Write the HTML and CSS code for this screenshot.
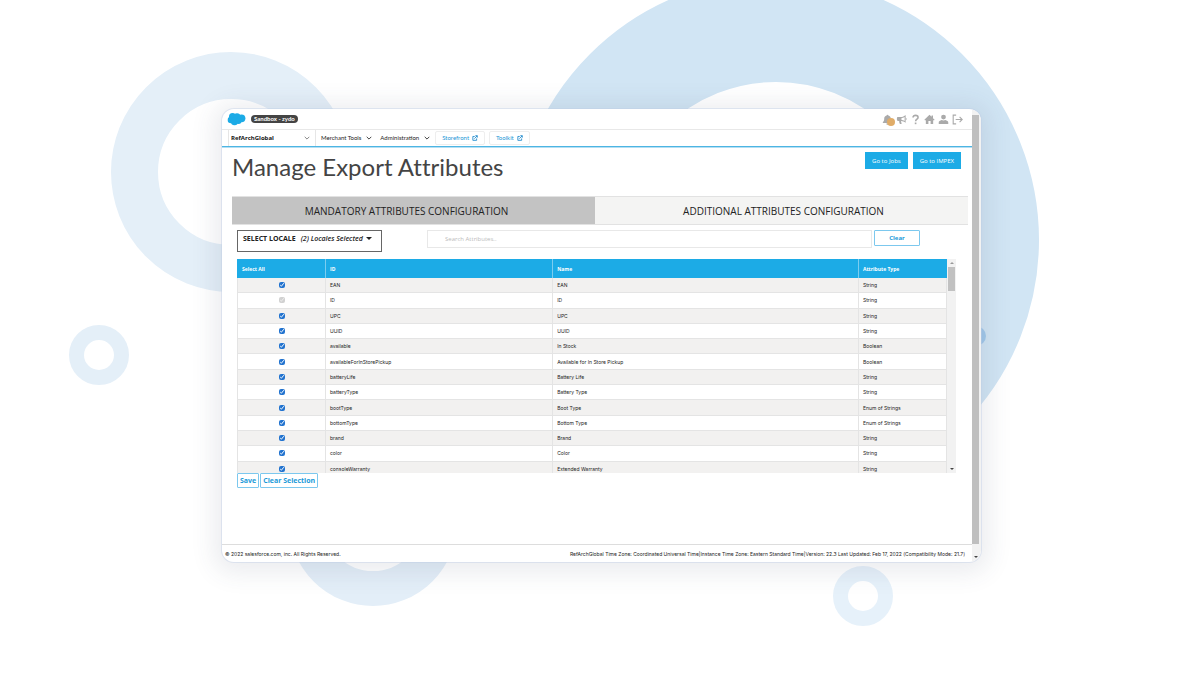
FILE: index.html
```html
<!DOCTYPE html>
<html lang="en">
<head>
<meta charset="utf-8">
<title>Manage Export Attributes</title>
<link rel="stylesheet" href="styles.css">
</head>
<body>
<svg class="backdrop" width="1200" height="676" viewBox="0 0 1200 676" aria-hidden="true">
  <g fill="none">
    <circle cx="776" cy="240" r="210.5" stroke="#d1e5f4" stroke-width="105"/>
    <circle cx="231" cy="172" r="96.5" stroke="#e4eff8" stroke-width="47"/>
    <circle cx="373" cy="522" r="66.5" stroke="#e3eef8" stroke-width="35"/>
    <circle cx="99" cy="355" r="22.5" stroke="#e4eff8" stroke-width="15"/>
    <circle cx="863" cy="596" r="22.5" stroke="#e6f1fa" stroke-width="15"/>
  </g>
  <circle cx="976" cy="336" r="10" fill="#a2c9ea"/>
</svg>
<main class="window">
  <div class="page">
    <header class="topbar">
      <svg class="cloud" viewBox="0 0 19 14" aria-label="Salesforce"><g fill="#1cabe6"><circle cx="5.500" cy="4.500" r="3.500"/><circle cx="10" cy="4.600" r="3.300"/><circle cx="14.500" cy="6.300" r="3.900"/><circle cx="4" cy="8" r="3.300"/><circle cx="7.500" cy="9.500" r="3.700"/><circle cx="11.500" cy="9" r="3"/></g></svg>
      <span class="badge">Sandbox - zydo</span>
      <div class="tools">
        <button class="tool bell" aria-label="Notifications"><svg viewBox="0 0 12 12"><path fill="#aaa" d="M6 .8c.6 0 .9.4.9.9C8.800 2.200 9.600 3.500 9.600 5.200c0 2 .5 2.900 1.500 3.800v.8H.9V9c1-.9 1.500-1.800 1.500-3.800 0-1.700.8-3 2.700-3.500 0-.5.300-.9.900-.9ZM4.600 10.300h2.800a1.400 1.400 0 0 1-2.800 0Z"/></svg><i class="dot"></i></button>
        <button class="tool" aria-label="Announcements"><svg viewBox="0 0 12 12"><path fill="#aaa" d="M10.500 1v8.500C9 8.300 7.500 7.700 5.600 7.600c-.3.900.2 1.800.8 2.700-.7.600-1.800.600-2.300.2-.5-1-.8-1.900-.6-2.900H2.200C1.500 7.600 1 7.100 1 6.400V4.500c0-.7.500-1.200 1.200-1.200H5C7.300 3.200 9 2.400 10.500 1ZM9.400 3.200C8.400 3.900 7.200 4.300 6 4.400v2.100c1.200.1 2.400.5 3.400 1.100ZM10.800 4.200a1.300 1.300 0 0 1 0 2.400Z"/></svg></button>
        <button class="tool" aria-label="Help"><svg viewBox="0 0 12 12"><path fill="none" stroke="#aaa" stroke-width="1.700" d="M3.300 3.800C3.300 2.200 4.400 1.500 6 1.500s2.800.9 2.800 2.300C8.800 5.600 6.100 5.700 6.100 8"/><rect x="5.200" y="9.300" width="1.800" height="1.800" fill="#aaa"/></svg></button>
        <button class="tool" aria-label="Home"><svg viewBox="0 0 12 12"><path fill="#aaa" d="M6 .9 8.300 3.100V1.600h1.500v3L11.600 6.400l-.8.800L10 6.500V11H7.200V7.700H4.800V11H2V6.500l-.8.700-.8-.8Z"/></svg></button>
        <button class="tool" aria-label="Account"><svg viewBox="0 0 12 12"><circle cx="6" cy="3.400" r="2.600" fill="#aaa"/><path fill="#aaa" d="M.8 10.800V9.400C.8 7.600 2.300 7 4 6.500c1 .7 3 .7 4 0 1.700.5 3.200 1.100 3.200 2.900v1.400Z"/></svg></button>
        <button class="tool" aria-label="Log out"><svg viewBox="0 0 12 12"><path fill="none" stroke="#aaa" stroke-width="1.200" d="M4.500 1.200H1.300v9.600h3.200M4 6h7M8.300 3.200 11.100 6 8.300 8.800"/></svg></button>
      </div>
    </header>
    <nav class="nav">
      <div class="site">
        <select class="site-select" aria-label="Site"><option>RefArchGlobal</option></select>
        <svg class="chev thin" viewBox="0 0 6 4"><path d="M.7.800 3 3.100 5.300.8"/></svg>
      </div>
      <button class="menu">Merchant Tools<svg class="chev" viewBox="0 0 6 4"><path d="M.7.800 3 3.100 5.300.8"/></svg></button>
      <button class="menu">Administration<svg class="chev" viewBox="0 0 6 4"><path d="M.7.800 3 3.100 5.300.8"/></svg></button>
      <a class="ext" href="#">Storefront<svg viewBox="0 0 7 7"><path d="M3.200 1.700H1v4.500h4.400V4M2.800 4.300 6 1M3.900.800H6.200V3.100"/></svg></a>
      <a class="ext" href="#">Toolkit<svg viewBox="0 0 7 7"><path d="M3.200 1.700H1v4.500h4.400V4M2.800 4.300 6 1M3.900.800H6.200V3.100"/></svg></a>
    </nav>
    <section class="content">
      <div class="heading">
        <h1>Manage Export Attributes</h1>
        <div class="actions"><button class="primary">Go to Jobs</button><button class="primary">Go to IMPEX</button></div>
      </div>
      <div class="tabs">
        <button class="tab active">MANDATORY ATTRIBUTES CONFIGURATION</button>
        <button class="tab">ADDITIONAL ATTRIBUTES CONFIGURATION</button>
      </div>
      <div class="panel">
        <div class="filters">
          <button class="locale"><b>SELECT LOCALE</b><em>(2) Locales Selected</em><i class="caret"></i></button>
          <input class="search" type="text" aria-label="Search attributes" placeholder="Search Attributes..">
          <button class="outline clear">Clear</button>
        </div>
        <div class="grid">
          <div class="rows">
            <table>
              <thead><tr><th class="c1">Select All</th><th class="c2">ID</th><th class="c3">Name</th><th class="c4">Attribute Type</th></tr></thead>
              <tbody>
                <tr><td><input type="checkbox" aria-label="EAN" checked></td><td>EAN</td><td>EAN</td><td>String</td></tr>
                <tr><td><input type="checkbox" aria-label="ID" checked disabled></td><td>ID</td><td>ID</td><td>String</td></tr>
                <tr><td><input type="checkbox" aria-label="UPC" checked></td><td>UPC</td><td>UPC</td><td>String</td></tr>
                <tr><td><input type="checkbox" aria-label="UUID" checked></td><td>UUID</td><td>UUID</td><td>String</td></tr>
                <tr><td><input type="checkbox" aria-label="available" checked></td><td>available</td><td>In Stock</td><td>Boolean</td></tr>
                <tr><td><input type="checkbox" aria-label="availableForInStorePickup" checked></td><td>availableForInStorePickup</td><td>Available for In Store Pickup</td><td>Boolean</td></tr>
                <tr><td><input type="checkbox" aria-label="batteryLife" checked></td><td>batteryLife</td><td>Battery Life</td><td>String</td></tr>
                <tr><td><input type="checkbox" aria-label="batteryType" checked></td><td>batteryType</td><td>Battery Type</td><td>String</td></tr>
                <tr><td><input type="checkbox" aria-label="bootType" checked></td><td>bootType</td><td>Boot Type</td><td>Enum of Strings</td></tr>
                <tr><td><input type="checkbox" aria-label="bottomType" checked></td><td>bottomType</td><td>Bottom Type</td><td>Enum of Strings</td></tr>
                <tr><td><input type="checkbox" aria-label="brand" checked></td><td>brand</td><td>Brand</td><td>String</td></tr>
                <tr><td><input type="checkbox" aria-label="color" checked></td><td>color</td><td>Color</td><td>String</td></tr>
                <tr><td><input type="checkbox" aria-label="consoleWarranty" checked></td><td>consoleWarranty</td><td>Extended Warranty</td><td>String</td></tr>
              </tbody>
            </table>
          </div>
          <div class="track"><i class="arrow up"></i><i class="thumb"></i><i class="arrow down"></i></div>
        </div>
        <div class="buttons"><button class="outline">Save</button><button class="outline">Clear Selection</button></div>
      </div>
    </section>
    <footer class="footer">
      <span>© 2022 salesforce.com, inc. All Rights Reserved.</span>
      <span>RefArchGlobal Time Zone: Coordinated Universal Time|Instance Time Zone: Eastern Standard Time|Version: 22.3 Last Updated: Feb 17, 2022 (Compatibility Mode: 21.7)</span>
    </footer>
  </div>
  <div class="scroll"><i class="bar"></i><i class="arrow down"></i></div>
</main>
</body>
</html>
```
FILE: styles.css
```css
* { box-sizing: border-box; }
body {
  margin: 0;
  padding: 109px 219px 0 222px;
  min-height: 100vh;
  background: #fff;
  color: #222;
  font: 5px/8px Inter, Arial, sans-serif;
  overflow: hidden;
}
button, select, input { font: inherit; color: inherit; margin: 0; padding: 0; border: 0; border-radius: 0; background: none; }
a { text-decoration: none; }

.backdrop { position: absolute; left: 0; top: 0; }

.window {
  position: relative;
  display: flex;
  background: #fff;
  border-radius: 12px;
  overflow: hidden;
  box-shadow: 0 0 0 1px rgba(190, 205, 230, .4), 0 3px 24px 8px rgba(60, 65, 95, .1);
}
.page { flex: 1; min-width: 0; display: flex; flex-direction: column; }
.scroll { width: 9px; padding: 6px 2px 0 0; display: flex; flex-direction: column; align-items: center; background: #f2f2f2; }
.bar { width: 100%; flex: 1; background: #bfbfbf; }
.scroll .down { margin: 12px 0 4px; }

.arrow { border: 2px solid transparent; }
.arrow.up { border-top: 0; border-bottom-color: #999; }
.arrow.down { border-bottom: 0; border-top-color: #444; }

.topbar { height: 21px; padding: 0 9px 0 5px; display: flex; align-items: center; gap: 5px; border-bottom: 1px solid #e8e8e8; }
.cloud { width: 19px; height: 14px; }
.badge { padding: 0 3px; border-radius: 4px; background: #444; color: #fff; font: bold 6px/8px Lato, sans-serif; }
.tools { margin-left: auto; display: flex; gap: 3px; }
.tool { width: 11px; height: 11px; }
.tool svg { display: block; width: 11px; height: 11px; }
.bell { position: relative; }
.dot { position: absolute; left: 5px; top: 4px; width: 8px; height: 8px; border-radius: 50%; background: #e0ac68; }

.nav { height: 17px; padding-left: 6px; display: flex; align-items: center; border-bottom: 1px solid #4db5e3; box-shadow: 0 1px #b5dff3; font: 6px/8px Lato, sans-serif; }
.site { height: 16px; width: 88px; padding: 0 5px 0 2px; display: flex; align-items: center; border: solid #e6e6e6; border-width: 0 1px; }
.site-select { flex: 1; appearance: none; font: bold 6px/8px "Open Sans", sans-serif; color: #111; }
.chev { width: 6px; height: 4px; fill: none; stroke: #444; stroke-width: 1; }
.chev.thin { stroke: #888; }
.menu { display: flex; align-items: center; gap: 5px; margin-left: 5px; }
.menu + .menu { margin-left: 8px; }
.ext { height: 14px; padding: 0 6px; margin-left: 4px; display: flex; align-items: center; gap: 3px; border: 1px solid #eee; border-radius: 2px; color: #1b96d6; }
.menu + .ext { margin-left: 5px; }
.ext svg { width: 6px; height: 6px; fill: none; stroke: #1b88cc; stroke-width: 1; }

.content { padding: 5px 4px 0 10px; height: 397px; }
.heading { height: 44px; display: flex; justify-content: space-between; align-items: flex-start; padding-right: 7px; }
h1 { margin: 0; font: 24px/30px Lato, sans-serif; font-variant-ligatures: none; color: #444; }
.actions { display: flex; gap: 5px; }
.primary { height: 17px; padding: 0 7px; background: #1cabe6; color: #fff; font: 6px/8px "Open Sans", sans-serif; }

.tabs { display: grid; grid-template-columns: 363fr 373fr; height: 29px; border: solid #e2e2e2; border-width: 1px 0; }
.tab { padding-left: 4px; background: #f4f4f3; font: 10px/14px "Open Sans", sans-serif; }
.tab.active { padding: 0 14px 0 0; background: #c3c3c3; }

.panel { padding: 5px 12px 0 5px; }
.filters { display: flex; align-items: flex-start; padding-right: 36px; }
.locale { width: 145px; height: 22px; padding: 0 9px 5px 5px; display: flex; align-items: center; border: 1px solid #666; color: #222; font: 7px/8px "Open Sans", sans-serif; }
.locale em { margin-left: 5px; font-weight: 600; }
.caret { margin-left: auto; border: 3px solid transparent; border-top-color: #222; border-bottom: 0; }
.search { flex: 1; min-width: 0; height: 18px; margin-left: 45px; padding: 0 17px; border: 1px solid #e8e8e8; font: 6px/8px "Open Sans", sans-serif; }
.search::placeholder { color: #bbb; }
.outline { height: 15px; padding: 0 3px; border: 1px solid #7cc8ee; border-radius: 1px; color: #1b9ad8; background: #fff; font: bold 6px/8px "Open Sans", sans-serif; }
.clear { width: 46px; height: 16px; margin-left: 2px; }

.grid { display: flex; height: 214px; margin-top: 7px; overflow: hidden; }
.rows { flex: 1; height: 214px; overflow: hidden; }
table { width: 100%; height: 218px; table-layout: fixed; border-collapse: separate; border-spacing: 0; }
th { height: 19px; padding: 0 4px; text-align: left; background: #1cabe6; color: #fff; font: bold 5px/8px "Open Sans", sans-serif; border-left: 1px solid #7bcdf0; }
th:first-child { border-left-color: #1cabe6; }
td { padding: 0 4px; border: solid #e4e4e4; border-width: 0 0 1px 1px; }
td:first-child { text-align: center; line-height: 0; }
td:last-child { border-right-width: 1px; }
tbody tr:nth-child(odd) { background: #f2f1f0; }
.c1 { width: 88px; }
.c2 { width: 32%; }
.c4 { width: 89px; }
td input { width: 6px; height: 6px; accent-color: #2273cf; }
.track { width: 9px; padding: 3px 0; display: flex; flex-direction: column; align-items: center; background: #f2f2f2; }
.thumb { width: 7px; height: 24px; margin-top: 3px; background: #c1c1c1; }
.track .down { margin-top: auto; }
.buttons { display: flex; gap: 1px; }
.buttons .outline { font-size: 7px; padding: 0 2px; }

.footer { height: 18px; padding: 0 7px 0 3px; display: flex; justify-content: space-between; align-items: center; border-top: 1px solid #ddd; }
```
